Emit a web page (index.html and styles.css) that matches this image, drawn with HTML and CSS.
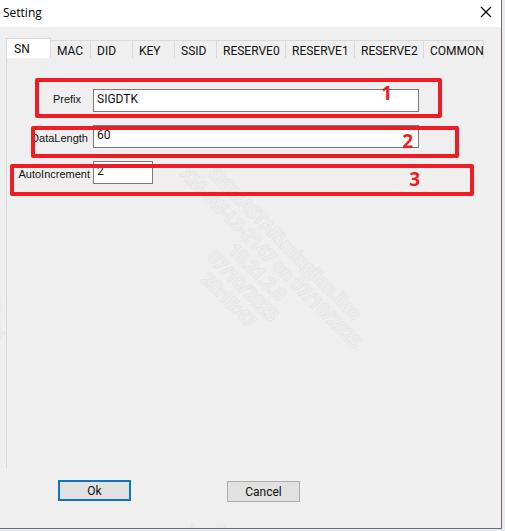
FILE: index.html
```
<!DOCTYPE html>
<html lang="en">

<head>
    <meta charset="UTF-8">
    <meta name="viewport" content="width=device-width, initial-scale=1.0">
    <title>Setting</title>
    <link rel="stylesheet" href="styles.css">
</head>

<body>
    <div class="window">
        <header class="title-bar">
            <h1>Setting</h1>
            <button class="btn-close" aria-label="Close">
                <svg width="12" height="12" viewBox="0 0 12 12">
                    <path d="M1 1 L11 11 M11 1 L1 11" stroke="#000" stroke-width="1.2" fill="none" />
                </svg>
            </button>
        </header>

        <form class="content" onsubmit="return false">
            <div class="tabs" role="tablist">
                <button type="button" class="tab active" role="tab" aria-selected="true">SN</button>
                <button type="button" class="tab" role="tab">MAC</button>
                <button type="button" class="tab" role="tab">DID</button>
                <button type="button" class="tab" role="tab">KEY</button>
                <button type="button" class="tab" role="tab">SSID</button>
                <button type="button" class="tab" role="tab">RESERVE0</button>
                <button type="button" class="tab" role="tab">RESERVE1</button>
                <button type="button" class="tab" role="tab">RESERVE2</button>
                <button type="button" class="tab" role="tab">COMMON</button>
            </div>

            <div class="panel" role="tabpanel">
                <div class="field field-prefix">
                    <label for="prefix">Prefix</label>
                    <input type="text" id="prefix" value="SIGDTK">
                </div>
                <div class="field field-length">
                    <label for="dataLength">DataLength</label>
                    <input type="text" id="dataLength" value="60">
                </div>
                <div class="field field-increment">
                    <label for="autoIncrement">AutoIncrement</label>
                    <input type="text" id="autoIncrement" value="2">
                </div>
            </div>

            <div class="buttons">
                <button type="submit" class="btn btn-ok">Ok</button>
                <button type="button" class="btn btn-cancel">Cancel</button>
            </div>
        </form>

        <!-- Watermark -->
        <div class="watermark" aria-hidden="true">SIGMASTAR\mingjian.liao<br>XM-SW-L3-2147 on 07/10/2025<br>10.21.2.0<br>07/10/2025<br>20:15:47</div>
        <div class="watermark watermark-left" aria-hidden="true">SIGMASTAR\mingjian.liao<br>XM-SW-L3-2147 on 07/10/2025</div>
        <div class="watermark watermark-bottom" aria-hidden="true">SIGMASTAR\mingjian.liao<br>XM-SW-L3-2147 on 07/10/2025</div>

        <!-- Numbered markers over the fields -->
        <div class="marker marker-1">1</div>
        <div class="marker marker-2">2</div>
        <div class="marker marker-3">3</div>
    </div>
</body>

</html>
```
FILE: styles.css
```
* {
    box-sizing: border-box;
}

body {
    margin: 0;
    background-color: #e8ebef;
    font-family: Roboto, "Liberation Sans", sans-serif;
    font-size: 12px;
    color: #111;
}

button,
input {
    font: inherit;
    color: inherit;
}

.window {
    position: relative;
    display: flex;
    flex-direction: column;
    min-height: calc(100vh - 2px);
    margin-right: 3px;
    background-color: #efefef;
    border-right: 1px solid #6e6e6e;
    border-bottom: 1px solid #6e6e6e;
    overflow: hidden;
}

.title-bar {
    display: flex;
    align-items: center;
    justify-content: space-between;
    height: 27px;
    padding: 0 8px 3px 3px;
    background-color: #fff;
}

.title-bar h1 {
    margin: 0;
    font-family: "Open Sans", sans-serif;
    font-size: 12px;
    font-weight: normal;
    color: #000;
}

.btn-close {
    display: flex;
    padding: 1px;
    border: none;
    background: none;
}

.content {
    flex: 1;
    display: flex;
    flex-direction: column;
    padding: 11px 17px 26px 6px;
}

/* Tabs */
.tabs {
    display: grid;
    grid-template-columns: 45fr 40fr 42fr 42fr 42fr 69fr 69fr 69fr minmax(0, 60fr);
    align-items: end;
    height: 20px;
}

.tab {
    min-width: 0;
    height: 18px;
    padding: 2px 0 0 6px;
    border: 1px solid #d9d9d9;
    border-width: 1px 1px 0 0;
    background: none;
    text-align: left;
    line-height: 14px;
    white-space: nowrap;
}

.tab.active {
    height: 20px;
    padding: 0 0 0 7px;
    border-left-width: 1px;
    background-color: #fff;
}

/* Fields */
.panel {
    flex: 1;
    padding: 31px 0 0 0;
    border-left: 1px solid #d9d9d9;
}

.field {
    display: flex;
    height: 23px;
    margin-bottom: 13px;
}

.field label {
    width: 86px;
    padding-right: 3px;
    text-align: right;
    font-family: "Liberation Sans", sans-serif;
    font-size: 11px;
    line-height: 26px;
}

.field input {
    width: 326px;
    height: 23px;
    padding: 0 3px 4px;
    border: 1px solid #7a7a7a;
    background-color: #fff;
}

.field-prefix label {
    padding-right: 12px;
    line-height: 20px;
}

.field-length label {
    padding-right: 5px;
}

.field-increment input {
    width: 60px;
}

/* Buttons */
.buttons {
    display: flex;
    gap: 96px;
    padding: 12px 0 0 52px;
}

.btn {
    width: 73px;
    height: 21px;
    padding: 0;
    border: 1px solid #adadad;
    background-color: #e1e1e1;
}

.btn-ok {
    border: 2px solid #0f74bf;
}

.btn-cancel {
    margin-top: 1px;
}

/* Markers */
.marker {
    position: absolute;
    border: 4px solid #ee1c24;
    border-radius: 2px;
    font-family: "Noto Sans", sans-serif;
    font-size: 19px;
    font-weight: bold;
    line-height: 22px;
    text-align: right;
    color: #ee1c24;
    pointer-events: none;
}

.marker-1 {
    top: 78px;
    left: 35px;
    width: 407px;
    height: 40px;
    padding-right: 46px;
}

.marker-2 {
    top: 126px;
    left: 31px;
    width: 428px;
    height: 32px;
    padding-right: 42px;
}

.marker-3 {
    top: 164px;
    left: 10px;
    width: 464px;
    height: 32px;
    padding-right: 50px;
}

/* Watermark */
.watermark {
    position: absolute;
    top: 222px;
    left: 117px;
    width: 280px;
    font-family: "Open Sans", sans-serif;
    font-size: 17px;
    font-weight: 600;
    line-height: 20px;
    text-align: center;
    white-space: nowrap;
    color: #ededed;
    -webkit-text-stroke: 2px #e6e6e6;
    paint-order: stroke fill;
    transform: rotate(45deg);
    pointer-events: none;
}

.watermark-left {
    top: 224px;
    left: -219px;
}

.watermark-bottom {
    top: 588px;
    left: 142px;
}
```
